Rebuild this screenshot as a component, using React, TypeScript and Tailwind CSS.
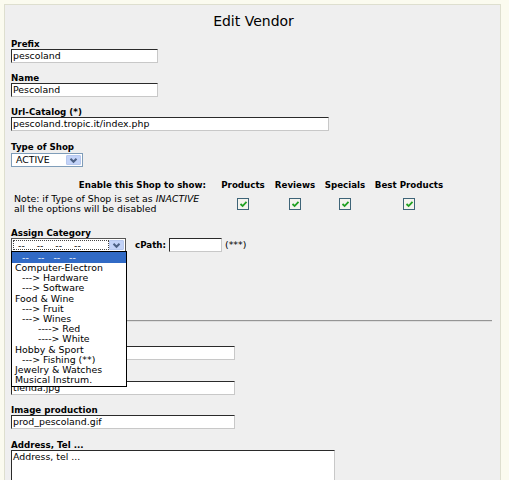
import React from "react";

const font = { fontFamily: '"DejaVu Sans", Verdana, sans-serif' };

function Input({ w, value, mt = "" }: { w: string; value: string; mt?: string }) {
  return (
    <div
      className={`${w} ${mt} h-[14px] bg-white border border-t-[#2a2a2a] border-l-[#2a2a2a] border-b-[#c8c8c8] border-r-[#c8c8c8] pl-[1px] text-[9.4px] leading-[12px] text-black whitespace-nowrap overflow-hidden`}
    >
      {value}
    </div>
  );
}

function Label({ children, mt }: { children?: React.ReactNode; mt: string }) {
  return <div className={`${mt} h-[10px] text-[8.7px] leading-[10px] font-bold text-black whitespace-nowrap`}>{children}</div>;
}

function Arrow() {
  return (
    <div className="w-[15px] h-full bg-[#c3d3f8] border border-[#b7c8ee] rounded-[1px] flex items-center justify-center">
      <svg width="9" height="7" viewBox="0 0 9 7">
        <path d="M1.5 1.8 L4.5 4.8 L7.5 1.8" stroke="#4d6185" strokeWidth="2" fill="none" />
      </svg>
    </div>
  );
}

function Check() {
  return (
    <div className="w-[12px] h-[12px] border border-[#3e6478] bg-[#f4f4ee] flex items-center justify-center">
      <svg width="9" height="8" viewBox="0 0 9 8">
        <path d="M1.5 4 L3.6 6 L7.5 1.8" stroke="#21a121" strokeWidth="1.8" fill="none" />
      </svg>
    </div>
  );
}

export default function App() {
  const items: [string, number][] = [
    ["Computer-Electron", 3],
    ["---> Hardware", 10],
    ["---> Software", 10],
    ["Food & Wine", 3],
    ["---> Fruit", 10],
    ["---> Wines", 10],
    ["----> Red", 26],
    ["----> White", 26],
    ["Hobby & Sport", 3],
    ["---> Fishing (**)", 10],
    ["Jewelry & Watches", 3],
    ["Musical Instrum.", 3],
  ];
  return (
    <div className="w-[509px] h-[480px] overflow-hidden bg-[#fbfbef] pt-[4px] pl-[4px]" style={font}>
      <div className="relative w-[497px] h-[490px] bg-[#efefef] border border-[#dedfcf] pl-[6px] text-black">
        <div className="pt-[8px] h-[24px] text-center text-[14px] leading-[16px] pr-[4px]">Edit Vendor</div>

        <Label mt="mt-[10px]">Prefix</Label>
        <Input w="w-[147px]" value="pescoland" />
        <Label mt="mt-[10px]">Name</Label>
        <Input w="w-[147px]" value="Pescoland" />
        <Label mt="mt-[10px]">Url-Catalog (*)</Label>
        <Input w="w-[318px]" value="pescoland.tropic.it/index.php" />
        <Label mt="mt-[11px]">Type of Shop</Label>
        <div className="mt-[1px] w-[72px] h-[14px] bg-white border border-[#7f9db9] flex items-stretch p-[1px]">
          <div className="flex-1 text-[9.4px] leading-[10px] pl-[3px]">ACTIVE</div>
          <Arrow />
        </div>

        <div className="mt-[13px] grid grid-cols-[200px_64px_40px_60px_68px] text-[9.4px]">
          <div className="h-[10px] text-[8.7px] leading-[10px] font-bold text-right pr-[5px] whitespace-nowrap">Enable this Shop to show:</div>
          {["Products", "Reviews", "Specials", "Best Products"].map((t) => (
            <div key={t} className="h-[10px] text-[8.7px] leading-[10px] font-bold flex justify-center whitespace-nowrap">
              <span>{t}</span>
            </div>
          ))}
          <div className="mt-[4px] pl-[3px] leading-[10px] whitespace-nowrap">
            <div>
              Note: if Type of Shop is set as <i>INACTIVE</i>
            </div>
            <div>all the options will be disabled</div>
          </div>
          {[0, 1, 2, 3].map((i) => (
            <div key={i} className="mt-[4px] flex justify-center items-center">
              <Check />
            </div>
          ))}
        </div>

        <Label mt="mt-[14px]">Assign Category</Label>
        <div className="flex items-center">
          <div className="w-[115px] h-[14px] bg-white border border-[#555] flex items-stretch p-[1px]">
            <div className="flex-1 border border-dotted border-[#444] text-[9.4px] leading-[9px] pl-[4px] whitespace-pre">{"--    --    --    --"}</div>
            <Arrow />
          </div>
          <span className="ml-[9px] text-[8.7px] font-bold">cPath:</span>
          <div className="ml-[3px] w-[53px] h-[14px] bg-white border border-t-[#2a2a2a] border-l-[#2a2a2a] border-b-[#c8c8c8] border-r-[#c8c8c8]" />
          <span className="ml-[3px] text-[9.4px]">(***)</span>
        </div>

        <div className="mt-[68px] mr-[8px] h-[2px] border-t border-[#959595] border-b border-b-[#dedede]" />

        <Label mt="mt-[14px]" />
        <Input w="w-[224px]" value="" />
        <Label mt="mt-[11px]" />
        <Input w="w-[224px]" value="tienda.jpg" />
        <Label mt="mt-[10px]">Image production</Label>
        <Input w="w-[224px]" value="prod_pescoland.gif" />
        <Label mt="mt-[11px]">Address, Tel ...</Label>
        <div className="w-[324px] h-[60px] bg-white border border-t-[#2a2a2a] border-l-[#2a2a2a] border-b-[#c8c8c8] border-r-[#c8c8c8] pl-[1px] text-[9.4px] leading-[11px]">
          Address, tel ...
        </div>

        <div className="absolute left-[6px] top-[246px] w-[116px] bg-white border border-black text-[9.4px] pb-[1px]">
          <div className="h-[11px] leading-[11px] bg-[#316ac5] text-white whitespace-pre pl-[10px]">{"--   --   --   --"}</div>
          {items.map(([t, p]) => (
            <div key={t} className="h-[10.2px] leading-[10.2px] whitespace-nowrap" style={{ paddingLeft: p }}>
              {t}
            </div>
          ))}
        </div>
      </div>
    </div>
  );
}
